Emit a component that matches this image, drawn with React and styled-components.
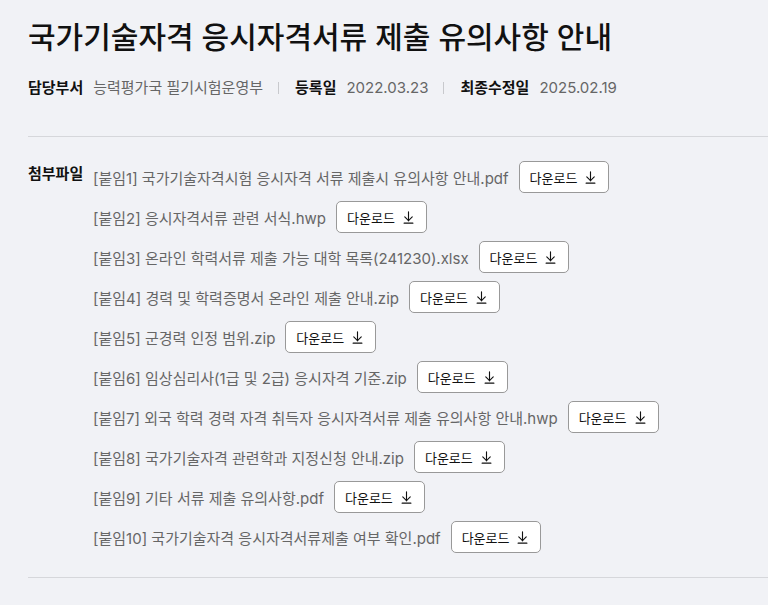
import React from 'react';
import styled, { createGlobalStyle } from 'styled-components';
import { ArrowDownToLine } from 'lucide-react';

const files = [
  '[붙임1] 국가기술자격시험 응시자격 서류 제출시 유의사항 안내.pdf',
  '[붙임2] 응시자격서류 관련 서식.hwp',
  '[붙임3] 온라인 학력서류 제출 가능 대학 목록(241230).xlsx',
  '[붙임4] 경력 및 학력증명서 온라인 제출 안내.zip',
  '[붙임5] 군경력 인정 범위.zip',
  '[붙임6] 임상심리사(1급 및 2급) 응시자격 기준.zip',
  '[붙임7] 외국 학력 경력 자격 취득자 응시자격서류 제출 유의사항 안내.hwp',
  '[붙임8] 국가기술자격 관련학과 지정신청 안내.zip',
  '[붙임9] 기타 서류 제출 유의사항.pdf',
  '[붙임10] 국가기술자격 응시자격서류제출 여부 확인.pdf',
];

const meta = [
  { label: '담당부서', value: '능력평가국 필기시험운영부' },
  { label: '등록일', value: '2022.03.23' },
  { label: '최종수정일', value: '2025.02.19' },
];

const App = () => {
  return (
    <>
      <GlobalStyle />
      <Page>
        <Title>국가기술자격 응시자격서류 제출 유의사항 안내</Title>
        <MetaRow>
          {meta.map((m, i) => (
            <MetaItem key={m.label} first={i === 0}>
              <MetaLabel>{m.label}</MetaLabel>
              <MetaValue>{m.value}</MetaValue>
            </MetaItem>
          ))}
        </MetaRow>

        <AttachSection>
          <AttachLabel>첨부파일</AttachLabel>
          <FileList>
            {files.map(name => (
              <FileRow key={name}>
                <FileName>{name}</FileName>
                <DownloadButton type="button">
                  다운로드 <ArrowDownToLine size={15} strokeWidth={1.8} />
                </DownloadButton>
              </FileRow>
            ))}
          </FileList>
        </AttachSection>
      </Page>
    </>
  );
};

// ========== STYLED COMPONENTS ==========

const GlobalStyle = createGlobalStyle`
  body {
    margin: 0;
    background: #f1f2f6;
    font-family: Inter, "Noto Sans CJK KR", "Noto Sans", sans-serif;
    color: #111;
  }
`;

const Page = styled.div`
  padding: 17px 0 0 28px;
`;

const Title = styled.h1`
  margin: 0;
  font-size: 30px;
  line-height: 40px;
  font-weight: 500;
  color: #111;
`;

const MetaRow = styled.div`
  display: flex;
  align-items: center;
  margin-top: 21px;
  padding-bottom: 38px;
  border-bottom: 1px solid #d6d7db;
`;

const MetaItem = styled.div`
  display: flex;
  align-items: center;
  gap: 10px;
  font-size: 15px;
  line-height: 20px;

  ${props => !props.first && `
    &::before {
      content: '';
      width: 1px;
      height: 12px;
      background: #c8c9cd;
      margin: 0 6px 0 15px;
    }
  `}
`;

const MetaLabel = styled.span`
  font-weight: 700;
  color: #111;
`;

const MetaValue = styled.span`
  color: #666;
`;

const AttachSection = styled.div`
  display: flex;
  padding: 24px 0 24px;
  border-bottom: 1px solid #d6d7db;
`;

const AttachLabel = styled.div`
  width: 65px;
  flex-shrink: 0;
  font-size: 15px;
  font-weight: 700;
  line-height: 26px;
  color: #111;
`;

const FileList = styled.div`
  display: flex;
  flex-direction: column;
  gap: 8px;
`;

const FileRow = styled.div`
  display: flex;
  align-items: center;
  gap: 10px;
  height: 32px;
`;

const FileName = styled.span`
  font-size: 15px;
  color: #666;
`;

const DownloadButton = styled.button`
  display: flex;
  align-items: center;
  gap: 6px;
  height: 32px;
  padding: 0 10px;
  background: white;
  border: 1px solid #999;
  border-radius: 5px;
  font-family: inherit;
  font-size: 13px;
  color: #111;
  cursor: pointer;

  svg {
    color: #111;
  }
`;

export default App;
